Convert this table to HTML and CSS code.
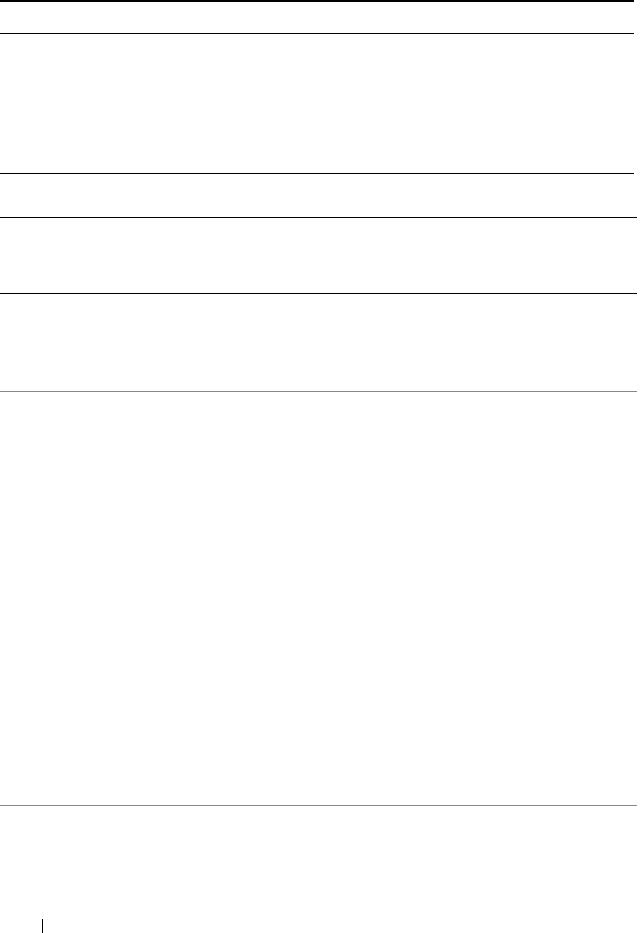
FILE: index.html
```html
<!DOCTYPE html>
<html lang="en">
<head>
    <meta charset="UTF-8">
    <meta name="viewport" content="width=device-width, initial-scale=1.0">
    <title>Table Page</title>
    <link rel="stylesheet" href="styles.css">
</head>
<body>
    <div class="page">
        <!-- Table -->
        <div class="table">
            <div class="row row-head"></div>
            <div class="row row-tall"></div>
            <div class="row row-short wide"></div>
            <div class="row row-mid wide"></div>
            <div class="row row-gray row-five wide"></div>
            <div class="row row-gray row-big wide"></div>
        </div>

        <!-- Footer -->
        <div class="footer">
            <span class="page-sep"></span>
        </div>
    </div>
</body>
</html>
```

FILE: styles.css
```css
body {
    margin: 0;
    background-color: #ffffff;
    font-family: "Liberation Sans", Arial, sans-serif;
}
.page {
    width: 641px;
    height: 933px;
    overflow: hidden;
}
.table {
    display: flex;
    flex-direction: column;
}
.row {
    box-sizing: border-box;
    width: 634px;
    border-bottom: 1px solid #000000;
}
.wide {
    width: 637px;
}
.row-head {
    height: 34px;
    border-top: 2px solid #000000;
}
.row-tall {
    height: 140px;
}
.row-short {
    height: 44px;
}
.row-mid {
    height: 76px;
}
.row-gray {
    border-bottom-color: #888888;
}
.row-five {
    height: 98px;
}
.row-big {
    height: 414px;
}

/* Footer styles */
.footer {
    padding: 113px 0 0 42px;
}
.page-sep {
    display: block;
    width: 1px;
    height: 20px;
    background-color: #000000;
}
```
